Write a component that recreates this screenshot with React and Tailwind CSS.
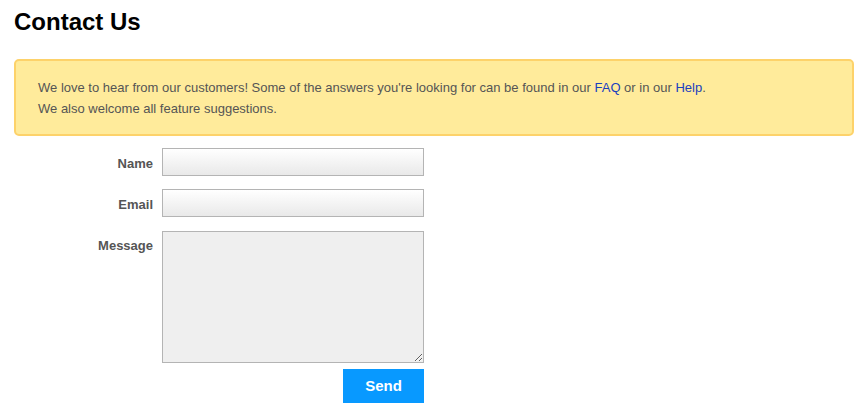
export default function App() {
  return (
    <div className="min-h-[411px] bg-white pl-[14px] pr-[12px] pt-[8px] font-['Liberation_Sans',Arial,sans-serif]">
      <h1 className="text-[24px] font-bold leading-[28px] text-black">Contact Us</h1>

      <div className="mt-[23px] rounded-[5px] border-2 border-[#fdd26a] bg-[#ffeb9b] px-[22px] pt-[16px] pb-[15px] text-[13px] leading-[21px] text-[#555]">
        <p>
          We love to hear from our customers! Some of the answers you're looking for can be found in our{' '}
          <a href="#" className="text-[#1a3fbf]">FAQ</a> or in our{' '}
          <a href="#" className="text-[#1a3fbf]">Help</a>.
        </p>
        <p>We also welcome all feature suggestions.</p>
      </div>

      <form className="mt-[12px] grid grid-cols-[139px_262px] gap-x-[9px] gap-y-[13px] text-[13px]">
        <label className="pt-[6px] text-right font-bold text-[#555]">Name</label>
        <input className="h-[28px] border border-[#b4b4b4] bg-gradient-to-b from-white to-[#e9e9e9] px-1 outline-none" />

        <label className="pt-[6px] text-right font-bold text-[#555]">Email</label>
        <input className="h-[28px] border border-[#b4b4b4] bg-gradient-to-b from-white to-[#e9e9e9] px-1 outline-none" />

        <label className="pt-[6px] text-right font-bold text-[#555]">Message</label>
        <div className="mt-[1px] flex flex-col items-end gap-[6px]">
          <textarea className="h-[132px] w-full border border-[#b4b4b4] bg-[#efefef] px-1 outline-none" />
          <button type="button" className="h-[34px] w-[81px] bg-[#0899ff] text-[15px] font-bold text-white">
            Send
          </button>
        </div>
      </form>
    </div>
  )
}
